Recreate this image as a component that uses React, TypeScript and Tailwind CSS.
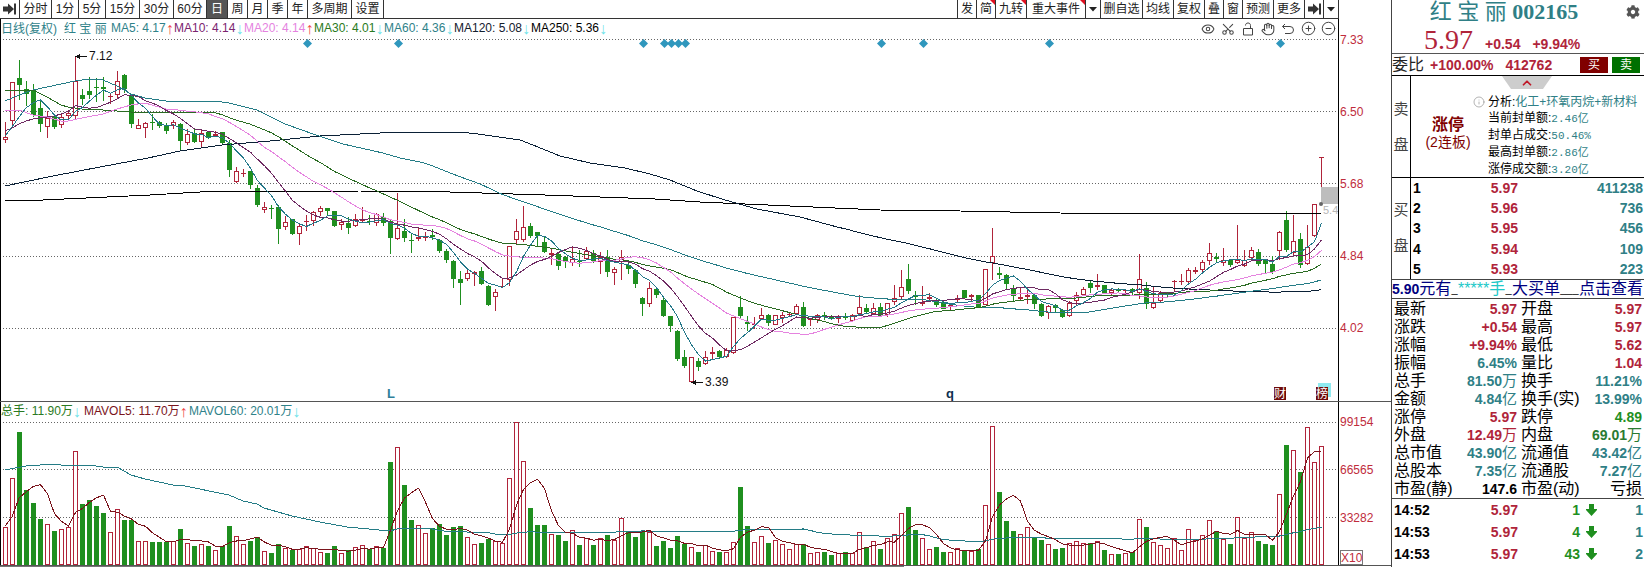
import { Eye, Scissors, Hand, CirclePlus, CircleMinus, Info, ChevronUp } from 'lucide-react'
import { FaCog } from 'react-icons/fa'
import clsx from 'clsx'

interface Candle {
  up: boolean
  high: number
  top: number
  bottom: number
  low: number
}

interface Bar {
  up: boolean
  top: number
}

type Point = [number, number]

// Plot rows are kept at three steps per pixel, each block counts from its own base row.
// Candle: direction, high, body top, body bottom, low
const CANDLE_BLOCKS = [
  {
    base: 0,
    rows: `r 366 412 419 428|r 247 247 364 382|g 181 234 254 299|g 243 267 281 318|g 253 270 344 352|g 304 324 371 395|r 332 353 380 413|g 347 349 380 387|r 343 352 374 384|r 331 340 349 362
r 169 244 349 358|g 268 285 296 314|g 230 273 284 297|g 234 262 263 305|g 231 262 266 304|r 278 288 289 312|r 213 244 284 296|g 222 226 266 279|g 281 287 371 385|r 356 376 386 386
r 366 368 385 413|g 343 366 369 390|g 363 367 377 383|g 370 377 392 402|r 360 367 377 387|g 368 373 422 450|r 388 403 428 435|g 388 399 425 430|r 390 400 427 440|g 392 396 413 418
r 394 401 407 410|g 396 396 428 433|g 420 428 509 532|r 501 514 545 549|r 508 519 520 531|g 512 514 554 566|g 555 564 614 622`,
  },
  {
    base: 570,
    rows: `r 36 51 59 68|g 45 54 56 87|g 46 51 116 162|r 78 97 110 120|g 87 88 131 135|r 103 109 131 165|r 75 94 97 122|r 62 67 92 108|r 48 55 65 77|g 54 55 62 74
g 62 63 107 111|r 88 97 104 120|g 80 98 113 131|r 72 88 107 110|r 51 88 92 98|g 75 94 97 104|r 70 73 98 108|g 68 82 98 107|g 88 94 143 192|r 9 115 146 150`,
  },
  {
    base: 600,
    rows: `g 58 93 113 125|g 98 120 122 158|r 80 111 116 122|r 97 110 115 122|g 87 105 110 121|g 117 120 152 158|g 146 153 180 188|g 180 183 236 263|g 214 237 250 314|r 210 220 236 243
r 214 215 223 258|g 202 213 253 255|g 255 258 314 317|r 267 275 290 332|r 234 257 262 264|r 139 139 240 258|r 58 92 119 132|r 19 82 119 125|g 69 79 107 113|g 96 97 109 140
g 110 126 155 160|r 144 160 164 194|g 155 162 197 210|g 168 171 186 203|r 141 178 188 197|g 150 183 186 200|r 141 153 178 180|g 150 159 184 188|r 156 172 186 222|g 150 171 215 231
r 202 208 220 256|r 150 172 185 240|g 190 195 206 221|g 208 211 251 264|g 290 294 311 348|r 246 265 312 321|g 260 268 284 295|g 292 300 348 350|g 348 349 377 395|g 391 394 476 483
g 450 472 497 505|r 472 472 545 548|g 474 484 500 512|r 453 470 493 495|r 441 455 463 480|g 450 452 470 476|r 444 451 470 474|r 352 352 460 463|g 289 322 347 357|g 348 366 371 392
r 352 371 373 386|r 323 346 356 360|g 343 346 368 378|r 345 346 374 376|r 336 346 354 370|r 338 342 345 349|r 311 319 343 345|g 306 322 379 381|r 355 358 361 377|r 342 346 361 369
g 336 346 350 360|g 344 347 353 357|r 345 350 356 370|g 340 350 352 361|r 341 346 362 367|r 286 320 343 345|g 313 325 335 342|r 309 325 341 345|g 310 321 347 350|r 308 310 346 352
r 256 295 305 314|r 210 262 290 299|g 192 237 272 281|g 272 286 292 315|r 258 306 311 318|r 278 291 296 303|g 293 299 314 322|g 306 309 326 328|r 313 315 322 331|r 286 295 301 306
g 270 271 294 297|r 283 286 292 302|g 285 286 322 323|r 208 208 314 316|r 85 168 188 241|g 200 220 224 237|g 222 226 251 266|g 256 264 288 304|r 262 290 296 301|r 264 285 290 311
g 283 285 313 326|g 308 312 349 351|r 314 317 339 357|g 313 315 325 337|g 326 329 350 354|r 303 310 349 351|r 277 286 304 319|r 262 268 284 287|g 242 248 263 278|r 222 254 261 270
g 254 256 278 281|r 266 271 278 288|g 265 271 274 280|r 267 271 274 278|g 264 268 277 285|r 162 238 280 296|g 246 263 311 328|r 258 310 324 326|r 272 280 304 306|g 277 279 282 291
r 240 243 245 274|r 223 243 247 256|r 203 210 247 250|r 201 210 217 222|r 179 187 209 220|r 129 160 183 196|g 158 171 176 186|r 145 179 188 198|g 180 180 195 200|r 76 179 190 191
r 150 181 199 201|r 140 149 175 181|g 146 157 193 199|g 178 180 193 220|g 169 192 215 223|r 93 95 154 180|g 33 60 150 157|r 45 124 159 164|g 99 118 196 203|r 76 142 193 195
r 13 13 109 112|r -129 -129 -129 -38`,
  },
]

const VOLUME_BLOCKS = [
  {
    base: 1140,
    rows: `r442 r295 g156 g331 g370 g418 r433 g454 r446 r440 r214 g373 g361 g379 g400 r455 r388 g420 g420 r484
r482 g487 g487 g487 r484 g448 r490 g499 r493 g499 r511 g497 g439 r469 r493 g484 g472 r512 g520 g493
r505 g511 r508 r499 r505 r517 g520 g499 r520 g511 r502 r496 g508 r499 g505 g247 r202`,
  },
  {
    base: 600,
    rows: `g856 g961 r976 r1000 g985 g973 g1006 g982 g979 r1012 r1033 g1030 g1018 r1024 r1030 r835 r667 r784 g925 g976
g976 r1003 g1006 g1024 r991 g1036 r1015 g1036 r1015 g1006 r1021 r955 g994 g1012 g997 r997 g1039 g1024 g1045 g1009
g1033 r1042 g1057 r1036 r1054 g1057 r1057 r1027 g862 g979 r1027 r1009 g1030 r1021 r1033 r1048 r1033 g1033 r1060 r1057
g1057 g1066 r1060 g1057 r1060 r997 g1042 r1024 g1048 r1015 r1003 r940 g922 g991 r1015 r1048 g1042 g1057 r1057 r1045
g1051 r1054 g1048 r916 r679 g877 g964 g994 r1003 r982 g1012 g1021 r1033 g1048 g1045 r1030 r1024 r1030 g1030 r1024
g1051 r1063 g1063 r1060 g1057 r958 g982 r1027 r1036 r1045 r1015 r1051 r988 r1021 r1006 r961 g994 r1018 g1033 r952
r1015 r997 g1024 g1033 g1036 r883 g736 r751 g817 r682 r787 r739`,
  },
]

const candles: Candle[] = CANDLE_BLOCKS.flatMap(({ base, rows }) =>
  rows.split(/[|\n]/).map((row) => {
    const [dir, ...v] = row.split(' ')
    const [high, top, bottom, low] = v.map((n) => (Number(n) + base) / 3)
    return { up: dir === 'r', high, top, bottom, low }
  }),
)

const bars: Bar[] = VOLUME_BLOCKS.flatMap(({ base, rows }) =>
  rows.split(/\s/).map((s) => ({ up: s[0] === 'r', top: (Number(s.slice(1)) + base) / 3 })),
)

const closes = candles.map((c) => (c.up ? c.top : c.bottom))
const volumes = bars.map((b) => b.top)

const RED = '#b0243a'
const GREEN = '#1f8f1f'
const BASELINE = 564

const xAt = (i: number) => 5.5 + 7 * i

// The lead covers the days that have no full window of history yet
function average(values: number[], period: number, lead: Point[]) {
  const points = [...lead]
  for (let i = period - 1; i < values.length; i++) {
    const window = values.slice(i - period + 1, i + 1)
    points.push([xAt(i), window.reduce((a, b) => a + b, 0) / period])
  }
  return points
}

const priceLines: { color: string; points: Point[] }[] = [
  {
    color: '#000000',
    points: [[5, 200], [43, 200], [150, 195], [200, 192], [360, 191], [450, 192], [545, 195], [655, 199], [700, 202], [790, 206], [880, 210], [960, 211], [1060, 213], [1140, 214], [1321, 213]],
  },
  {
    color: '#0a2036',
    points: average(closes, 120, [[5, 186], [53, 176], [100, 167], [148, 158], [180, 151], [222, 145], [270, 141], [320, 136], [360, 134], [400, 132], [460, 132], [478, 134], [520, 140], [533, 145], [560, 156], [590, 163], [625, 168], [650, 174], [670, 180], [697, 191], [725, 200], [757, 209], [800, 217]]),
  },
  {
    color: '#247c86',
    points: average(closes, 60, [[5, 101], [19, 95], [33, 90], [47, 87], [61, 84], [75, 81], [89, 79], [96, 79], [103, 80], [110, 83], [117, 86], [124, 90], [131, 94], [145, 98], [166, 101], [215, 101], [229, 103], [257, 110], [285, 124], [313, 134], [343, 144], [383, 153], [400, 158]]),
  },
  {
    color: '#2a6b22',
    points: average(closes, 30, [[5, 90], [33, 90], [47, 97], [61, 105], [68, 107], [82, 109], [103, 110], [131, 112], [159, 112], [187, 113]]),
  },
  {
    color: '#e583df',
    points: average(closes, 20, [[5, 110], [19, 110], [33, 115], [47, 117], [61, 121], [68, 121], [82, 118], [103, 114], [117, 109], [131, 105]]),
  },
  {
    color: '#6e2a62',
    points: average(closes, 10, [[5, 131], [12, 128], [19, 124], [26, 121], [33, 119], [40, 118], [47, 117], [54, 116], [61, 114]]),
  },
  { color: '#24788a', points: average(closes, 5, [[5, 136], [12, 127], [19, 117], [26, 108]]) },
]

const volumeLines: { color: string; points: Point[] }[] = [
  {
    color: '#247c86',
    points: average(volumes, 60, [[5, 470], [26, 466], [54, 464], [68, 466], [89, 465], [103, 467], [117, 467], [131, 475], [145, 479], [173, 485], [180, 485], [229, 495], [243, 501], [257, 504], [264, 508], [292, 516], [320, 522], [347, 527], [390, 531], [397, 529]]),
  },
  { color: '#7a141c', points: average(volumes, 5, [[5, 526], [12, 517], [19, 498], [26, 492]]) },
]

const DIAMOND_DAYS = [43, 56, 91, 94, 95, 96, 97, 125, 131, 149, 182]

const PERIODS = [
  { label: '分时', width: 'w-8' },
  { label: '1分', width: 'w-[27px]' },
  { label: '5分', width: 'w-[27px]' },
  { label: '15分', width: 'w-[34px]' },
  { label: '30分', width: 'w-[34px]' },
  { label: '60分', width: 'w-[33px]' },
  { label: '日', width: 'w-[21px]', active: true },
  { label: '周', width: 'w-5' },
  { label: '月', width: 'w-5' },
  { label: '季', width: 'w-5' },
  { label: '年', width: 'w-5' },
  { label: '多周期', width: 'w-[44px]' },
  { label: '设置', width: 'w-8' },
]

const TOOLS = [
  { label: '发', width: 'w-[19px]' },
  { label: '简', width: 'w-[19px]', flag: true },
  { label: '九转', width: 'w-[31px]', flag: true },
  { label: '重大事件', width: 'w-[59px]', flag: true },
  { label: '▾', width: 'w-[15px]' },
  { label: '删自选', width: 'w-[42px]' },
  { label: '均线', width: 'w-[31px]' },
  { label: '复权', width: 'w-[31px]' },
  { label: '叠', width: 'w-[19px]' },
  { label: '窗', width: 'w-[19px]' },
  { label: '预测', width: 'w-[31px]' },
  { label: '更多', width: 'w-[31px]' },
  { label: '⇥', width: 'w-[19px]' },
  { label: '▾', width: 'w-[15px]' },
]

const MA_LEGEND = [
  { text: 'MA5: 4.17', up: true, color: 'text-[#2f8289]', width: 'w-[63px]' },
  { text: 'MA10: 4.14', up: false, color: 'text-[#7b2470]', width: 'w-[70px]' },
  { text: 'MA20: 4.14', up: true, color: 'text-[#e583df]', width: 'w-[70px]' },
  { text: 'MA30: 4.01', up: false, color: 'text-[#2a7a22]', width: 'w-[70px]' },
  { text: 'MA60: 4.36', up: false, color: 'text-[#2f8289]', width: 'w-[70px]' },
  { text: 'MA120: 5.08', up: false, color: 'text-[#14202e]', width: 'w-[77px]' },
  { text: 'MA250: 5.36', up: false, color: 'text-black', width: 'w-[77px]' },
]

const VOL_LEGEND = [
  { text: '总手: 11.90万', up: false, color: 'text-[#2a7a22]', width: 'w-[83px]' },
  { text: 'MAVOL5: 11.70万', up: true, color: 'text-[#7a141c]', width: 'w-[105px]' },
  { text: 'MAVOL60: 20.01万', up: false, color: 'text-[#2f8289]', width: 'w-[112px]' },
]

const CHART_TOOLS = [
  { label: '显示', icon: <Eye size={14} strokeWidth={1.8} /> },
  { label: '剪切', icon: <Scissors size={14} strokeWidth={1.8} className="-rotate-90" /> },
  { label: '锁定', icon: <LockIcon /> },
  { label: '拖动', icon: <Hand size={14} strokeWidth={1.8} /> },
  { label: '撤销', icon: <UndoIcon /> },
  { label: '放大', icon: <CirclePlus size={15} strokeWidth={1.6} /> },
  { label: '缩小', icon: <CircleMinus size={15} strokeWidth={1.6} /> },
]

const LIMIT_INFO = [
  ['当前封单额', '2.46亿'],
  ['封单占成交', '50.46%'],
  ['最高封单额', '2.86亿'],
  ['涨停成交额', '3.20亿'],
]

const BIDS = [
  ['1', '5.97', '411238'],
  ['2', '5.96', '736'],
  ['3', '5.95', '456'],
  ['4', '5.94', '109'],
  ['5', '5.93', '223'],
]

const R = 'text-[#b0243a]'
const T = 'text-[#2f7f86]'
const G = 'text-[#1f8f1f]'

// label, number, unit, colour
const STATS: string[][][] = [
  [['最新', '5.97', '', R], ['开盘', '5.97', '', R]],
  [['涨跌', '+0.54', '', R], ['最高', '5.97', '', R]],
  [['涨幅', '+9.94%', '', R], ['最低', '5.62', '', R]],
  [['振幅', '6.45%', '', T], ['量比', '1.04', '', R]],
  [['总手', '81.50', '万', T], ['换手', '11.21%', '', T]],
  [['金额', '4.84', '亿', T], ['换手(实)', '13.99%', '', T]],
  [['涨停', '5.97', '', R], ['跌停', '4.89', '', G]],
  [['外盘', '12.49', '万', R], ['内盘', '69.01', '万', 'text-[#2a7a32]']],
  [['总市值', '43.90', '亿', T], ['流通值', '43.42', '亿', T]],
  [['总股本', '7.35', '亿', T], ['流通股', '7.27', '亿', T]],
  [['市盈(静)', '147.6', '', 'text-black'], ['市盈(动)', '', '亏损', 'text-black']],
]

const TICKS = [
  ['14:52', '5.97', '1', '1'],
  ['14:53', '5.97', '4', '1'],
  ['14:53', '5.97', '43', '2'],
]

function JumpIcon() {
  return (
    <svg width="13" height="12" viewBox="0 0 13 12" fill="#333">
      <path d="M0 3.500h5V.5l6 5.500-6 5.500v-3H0zM11 .5h2v11h-2z" />
    </svg>
  )
}

function CaretIcon() {
  return (
    <svg width="8" height="5" viewBox="0 0 8 5" fill="#222">
      <path d="M0 0h8L4 4.500z" />
    </svg>
  )
}

function LockIcon() {
  return (
    <svg width="14" height="14" viewBox="0 0 14 14" fill="none" stroke="currentColor">
      <path d="M2.500 6.500h9v6.500h-9zM4.500 3.500C4.500 1.800 5.600 1 7 1s2.500.8 2.500 2.500v3" />
    </svg>
  )
}

function UndoIcon() {
  return (
    <svg width="14" height="14" viewBox="0 0 14 14" fill="none" stroke="currentColor">
      <path d="M4 2L1.500 4.500 4 7M1.500 4.500h7.500a3.500 3.500 0 0 1 0 7H4" />
    </svg>
  )
}

function Legend({ items }: { items: typeof MA_LEGEND }) {
  return (
    <>
      {items.map((m) => (
        <span key={m.text} className={clsx('flex shrink-0 items-center leading-[19px]', m.color, m.width)}>
          {m.text}
          <span className={clsx('text-base leading-[19px]', m.up ? 'text-[#f04848]' : 'text-[#6fe3ea]')}>{m.up ? '↑' : '↓'}</span>
        </span>
      ))}
    </>
  )
}

function Grid({ rows }: { rows: number[] }) {
  return (
    <>
      {rows.map((y) => (
        <line key={y} x1="3" x2="1337" y1={y + 0.5} y2={y + 0.5} stroke="#666" strokeDasharray="1 2" />
      ))}
    </>
  )
}

function Lines({ lines }: { lines: { color: string; points: Point[] }[] }) {
  return (
    <>
      {lines.map((l, i) => (
        <polyline key={i} fill="none" stroke={l.color} points={l.points.map((p) => p.join(',')).join(' ')} />
      ))}
    </>
  )
}

function PriceChart() {
  return (
    <svg viewBox="1 38 1337 363" className="block w-full" shapeRendering="crispEdges">
      <Grid rows={[39, 111, 183, 256, 328]} />
      {candles.map((c, i) => {
        const x = xAt(i)
        const color = c.up ? RED : GREEN
        const top = Math.round(c.top)
        const height = Math.max(Math.round(c.bottom) - top, 1)
        return (
          <g key={i} stroke={color}>
            <line x1={x} x2={x} y1={Math.round(c.high)} y2={top} />
            <line x1={x} x2={x} y1={top + height} y2={Math.round(c.low)} />
            {height < 2 ? (
              <line x1={x - 2.5} x2={x + 2.5} y1={top + 0.5} y2={top + 0.5} />
            ) : (
              <rect x={x - 2} y={top + 0.5} width="4" height={height - 1} fill={c.up ? 'white' : color} />
            )}
          </g>
        )
      })}
      <Lines lines={priceLines} />

      {/* Event markers */}
      {DIAMOND_DAYS.map((d) => (
        <path key={d} d={`M${xAt(d) + 1} 39l4.5 4.5-4.5 4.5-4.5-4.5z`} fill="#2f97bd" shapeRendering="auto" />
      ))}

      {/* Extremes */}
      <g fontSize="12" fill="#111">
        <path d="M76 56.5h11" stroke="#111" />
        <path d="M75 56.5l5-2.5v5z" />
        <text x="89" y="60">7.12</text>
        <path d="M692 382.5h11" stroke="#111" />
        <path d="M691 382.5l5-2.5v5z" />
        <text x="705" y="386">3.39</text>
      </g>

      <rect x="1321" y="187" width="17" height="17" fill="#bdbdbd" />
      <circle cx="1321" cy="204" r="2" fill="#666" shapeRendering="auto" />
      <text x="1323" y="214" fontSize="11" fill="#b5b5b5">5.4</text>

      <g fontSize="13" fontWeight="bold">
        <text x="387" y="398" fill="#2f7f9a">L</text>
        <text x="946" y="398" fill="#0d2f4f">q</text>
      </g>
      <rect x="1318" y="383" width="13" height="14" fill="#8feaf0" />
      <rect x="1274" y="387" width="12" height="13" fill="#6e0a0a" />
      <rect x="1316" y="387" width="12" height="13" fill="#6e0a0a" />
      <g fontSize="12" fill="white">
        <text x="1274" y="398">财</text>
        <text x="1316" y="398">榜</text>
      </g>
    </svg>
  )
}

function VolumeChart() {
  return (
    <svg viewBox="1 421 1337 144" className="block w-full" shapeRendering="crispEdges">
      <Grid rows={[422, 469, 517]} />
      {bars.map((b, i) => {
        const top = Math.round(b.top)
        return (
          <rect
            key={i}
            x={xAt(i) - 2}
            y={top + 0.5}
            width="4"
            height={BASELINE - top}
            fill={b.up ? 'white' : GREEN}
            stroke={b.up ? RED : GREEN}
          />
        )
      })}
      <Lines lines={volumeLines} />
    </svg>
  )
}

function Toolbar() {
  return (
    <div className="flex h-[19px] flex-1 justify-between border-r border-b border-[#333] text-[#222]">
      <div className="flex">
        <button aria-label="跳转" className="flex w-5 items-center justify-center border-r border-[#333]">
          <JumpIcon />
        </button>
        {PERIODS.map((p) => (
          <button
            key={p.label}
            className={clsx(
              'flex items-center justify-center border-r border-[#333] whitespace-nowrap',
              p.width,
              p.active && 'bg-[#555] text-white',
            )}
          >
            {p.label}
          </button>
        ))}
      </div>
      <div className="flex">
        {TOOLS.map((t, i) => (
          <button
            key={i}
            className={clsx('relative flex items-center justify-center border-l border-[#333] whitespace-nowrap', t.width)}
          >
            {t.label === '▾' ? <CaretIcon /> : t.label === '⇥' ? <JumpIcon /> : t.label}
            {t.flag && (
              <svg className="absolute top-0 right-0" width="5" height="5" fill="#e01020">
                <path d="M0 0h5v5z" />
              </svg>
            )}
          </button>
        ))}
      </div>
    </div>
  )
}

function Quote() {
  return (
    <aside className="w-[253px] shrink-0 border-l border-[#444]">
      <header className="relative h-[54px] border-b border-[#555]">
        <h1 className="pr-7 text-center font-['Liberation_Serif','Noto_Sans_CJK_SC',serif] text-[22px] leading-[24px] text-[#2f7f86]">
          红 宝 丽 <b>002165</b>
        </h1>
        <button aria-label="设置" className="absolute top-[5px] right-1">
          <FaCog size={14} className="text-[#555]" />
        </button>
        <p className={clsx('flex h-[30px] items-baseline gap-3 pl-[32px] text-sm leading-[32px] font-bold', R)}>
          <span className="font-['Liberation_Serif',serif] text-[28px] leading-[32px] font-normal">5.97</span>
          <span>+0.54</span>
          <span>+9.94%</span>
        </p>
      </header>

      <div className="flex h-[22px] items-center border-b border-black text-sm">
        <span className="text-base text-[#222]">委比</span>
        <b className={clsx('ml-[6px]', R)}>+100.00%</b>
        <b className={clsx('ml-3', R)}>412762</b>
        <span className="mr-1 ml-auto flex gap-1 text-xs text-white">
          <button className="h-4 w-7 bg-[#800000] leading-4">买</button>
          <button className="h-4 w-7 bg-[#007000] leading-4">卖</button>
        </span>
      </div>

      <section className="flex h-[102px] border-b border-black">
        <div className="flex w-[19px] shrink-0 flex-col items-center gap-4 border-r border-black pt-[23px] text-[15px] leading-5 text-[#444]">
          <span>卖</span>
          <span>盘</span>
        </div>
        <div className="relative flex flex-1 pt-[18px] pl-[11px]">
          <button aria-label="收起" className="absolute top-0 left-[91px]">
            <svg width="50" height="13" fill="#cdcdcd">
              <path d="M0 0h50l-9 13H9z" />
            </svg>
            <ChevronUp size={14} strokeWidth={3} className="absolute top-0 left-[18px] text-[#c01828]" />
          </button>
          <p className="w-[52px] shrink-0 pt-[22px] text-center leading-[17px] whitespace-nowrap text-[#800000]">
            <b className="block text-base leading-[18px]">涨停</b>
            <span className="text-sm leading-[17px]">(2连板)</span>
          </p>
          <div className="flex-1 pl-1 text-xs leading-4 whitespace-nowrap">
            <p className="relative">
              <Info size={12} strokeWidth={1.5} className="absolute top-[2px] -left-[5px] text-[#999]" />
              <span className="ml-[10px]">分析:</span>
              <span className={T}>化工+环氧丙烷+新材料</span>
            </p>
            {LIMIT_INFO.map(([label, value]) => (
              <p key={label} className="ml-[10px]">
                {label}:
                <span className={clsx("font-['Liberation_Mono','Noto_Sans_CJK_SC',monospace] text-[11px]", T)}>{value}</span>
              </p>
            ))}
          </div>
        </div>
      </section>

      <section className="flex h-[102px] border-b border-[#444]">
        <div className="flex w-[19px] shrink-0 flex-col items-center gap-4 border-r border-black pt-[22px] text-[15px] leading-5 text-[#444]">
          <span>买</span>
          <span>盘</span>
        </div>
        <table className="flex-1 table-fixed text-sm leading-5 font-bold">
          <tbody>
            {BIDS.map(([level, price, qty]) => (
              <tr key={level}>
                <td className="w-5 pl-[2px]">{level}</td>
                <td className={clsx('w-[87px] text-right', R)}>{price}</td>
                <td className={clsx('w-[126px] pr-px text-right', T)}>{qty}</td>
              </tr>
            ))}
          </tbody>
        </table>
      </section>

      <a href="#orders" className="flex h-[19px] items-center justify-between border-b border-[#444] pr-px text-base leading-[18px] whitespace-nowrap text-[#000080]">
        <span>
          <b className="text-sm leading-[18px]">5.90</b>元有
        </span>
        <span className="text-[11px] text-black">_</span>
        <span className="text-[#20c8c8]">*****手</span>
        <span className="text-[11px] text-black">_</span>
        <span>大买单</span>
        <span className="text-[11px] text-black">___</span>
        <span>点击查看</span>
      </a>

      <div className="border-b border-[#444] pt-px">
        <table className="w-full table-fixed text-base leading-[18px] whitespace-nowrap">
          <tbody>
            {STATS.map((row) => (
              <tr key={row[0][0]}>
                {row.map(([label, value, unit, color], i) => [
                  <th key={label} className={clsx('p-0 text-left font-normal', i === 0 ? 'w-[64px] pl-[2px]' : 'w-[66px] pl-1')}>
                    {label}
                  </th>,
                  <td key={label + 'v'} className={clsx('p-0 text-right', color, i === 1 && 'pr-[2px]')}>
                    <b className="text-sm leading-[18px]">{value}</b>
                    <span className={unit === '亏损' ? 'text-base leading-[18px]' : 'text-[15px] leading-[18px]'}>{unit}</span>
                  </td>,
                ])}
              </tr>
            ))}
          </tbody>
        </table>
      </div>

      <table className="w-full table-fixed text-sm leading-[22px] font-bold">
        <tbody>
          {TICKS.map(([time, price, qty, count], i) => (
            <tr key={i}>
              <td className="w-[64px] pl-[2px]">{time}</td>
              <td className={clsx('w-[62px] text-right', R)}>{price}</td>
              <td className={clsx('w-[62px] text-right', G)}>{qty}</td>
              <td className="w-[23px] pl-[6px]">
                <svg width="11" height="12" viewBox="0 0 11 12" fill={GREEN}>
                  <path d="M3 0h5v5h3v1L5.500 12 0 6V5h3z" />
                </svg>
              </td>
              <td className={clsx('pr-px text-right', T)}>{count}</td>
            </tr>
          ))}
        </tbody>
      </table>
    </aside>
  )
}

export default function App() {
  return (
    <div className="flex bg-white font-['Liberation_Sans','Noto_Sans_CJK_SC',sans-serif] text-xs text-black">
      <main className="min-w-0 flex-1">
        <div className="flex">
          <Toolbar />
          <div className="w-[52px]" />
        </div>

        <section className="flex border-b border-[#555]">
          <div className="min-w-0 flex-1 border-x border-black">
            <div className="flex h-[19px] items-center justify-between whitespace-nowrap">
              <div className="flex items-center">
                <span className="w-[63px] shrink-0 text-[#2f8289]">日线(复权)</span>
                <span className="w-[47px] shrink-0 text-[#2f8289]">红 宝 丽</span>
                <Legend items={MA_LEGEND} />
              </div>
              <div className="flex text-[#444]">
                {CHART_TOOLS.map((t) => (
                  <button key={t.label} aria-label={t.label} className="flex w-5 items-center justify-center">
                    {t.icon}
                  </button>
                ))}
              </div>
            </div>
            <PriceChart />
          </div>
          <ul className="w-[52px] pt-[11px] pl-px leading-5 text-[#c02c3c]">
            {['7.33', '6.50', '5.68', '4.84', '4.02'].map((v) => (
              <li key={v} className="h-[72px]">{v}</li>
            ))}
          </ul>
        </section>

        <section className="flex border-b border-[#555]">
          <div className="min-w-0 flex-1 border-x border-black">
            <div className="flex h-[19px] items-center whitespace-nowrap">
              <Legend items={VOL_LEGEND} />
            </div>
            <VolumeChart />
          </div>
          <div className="w-[52px] pt-[10px] pl-px leading-5 text-[#c02c3c]">
            <ul>
              {['99154', '66565', '33282'].map((v) => (
                <li key={v} className="h-12">{v}</li>
              ))}
            </ul>
            <span className="-mt-[6px] block h-[15px] w-[23px] border border-[#777] text-center leading-[14px]">X10</span>
          </div>
        </section>
        <div className="h-px w-[65%] bg-[#777]" />
      </main>
      <Quote />
    </div>
  )
}
